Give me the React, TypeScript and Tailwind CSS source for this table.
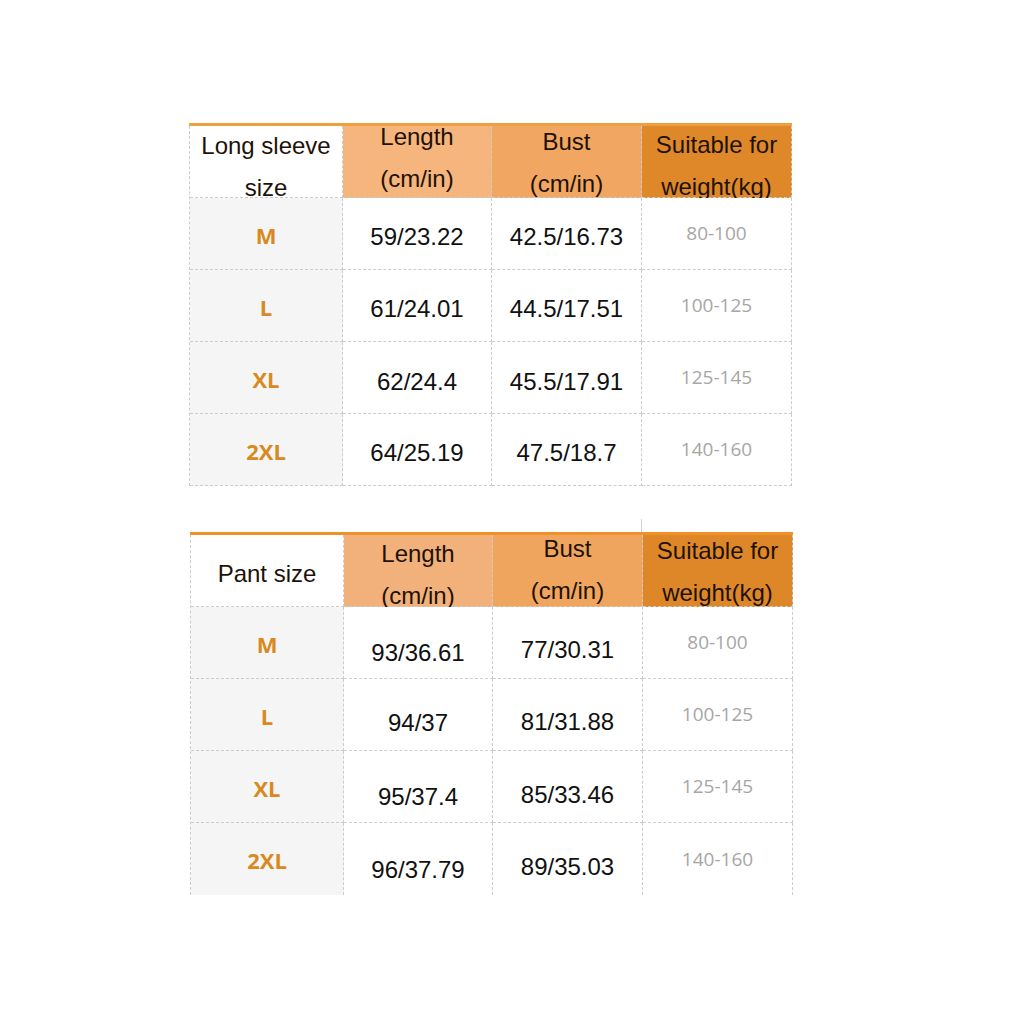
import React from "react";

type Row = { size: string; len: string; bust: string; weight: string; lenCls: string; bustCls: string };

const t1: Row[] = [
  { size: "M", len: "59/23.22", bust: "42.5/16.73", weight: "80-100", lenCls: "pt-[6px]", bustCls: "pt-[6px]" },
  { size: "L", len: "61/24.01", bust: "44.5/17.51", weight: "100-125", lenCls: "pt-[6px]", bustCls: "pt-[6px]" },
  { size: "XL", len: "62/24.4", bust: "45.5/17.91", weight: "125-145", lenCls: "pt-[8px]", bustCls: "pt-[8px]" },
  { size: "2XL", len: "64/25.19", bust: "47.5/18.7", weight: "140-160", lenCls: "pt-[6px]", bustCls: "pt-[6px]" },
];

const t2: Row[] = [
  { size: "M", len: "93/36.61", bust: "77/30.31", weight: "80-100", lenCls: "pt-[20px]", bustCls: "pt-[14px]" },
  { size: "L", len: "94/37", bust: "81/31.88", weight: "100-125", lenCls: "pt-[16px]", bustCls: "pt-[14px]" },
  { size: "XL", len: "95/37.4", bust: "85/33.46", weight: "125-145", lenCls: "pt-[20px]", bustCls: "pt-[16px]" },
  { size: "2XL", len: "96/37.79", bust: "89/35.03", weight: "140-160", lenCls: "pt-[22px]", bustCls: "pt-[16px]" },
];

const num = "font-['Liberation_Sans',Arial,sans-serif] text-[24px] leading-none text-[#111]";
const sizeCls = "font-['Open_Sans',sans-serif] font-bold text-[22px] leading-none text-[#d88a20]";
const wCls = "font-['Open_Sans',sans-serif] text-[19px] leading-none text-[#a6a6a6]";
const head = "font-['Liberation_Sans',Arial,sans-serif] text-[24px] leading-[42px] text-[#1e1208] text-center whitespace-nowrap";
const cellB = "border-r border-b border-dashed border-[#cccccc]";

function Body({ rows, last }: { rows: Row[]; last: boolean }) {
  return (
    <>
      {rows.map((r, i) => {
        const b = last && i === rows.length - 1 ? "border-r border-dashed border-[#cccccc]" : cellB;
        return (
          <React.Fragment key={r.size}>
            <div className={`${b} h-[72px] bg-[#f5f5f5] flex items-center justify-center pt-[2px]`}>
              <span className={sizeCls}>{r.size}</span>
            </div>
            <div className={`${b} h-[72px] bg-white flex items-center justify-center ${r.lenCls}`}>
              <span className={num}>{r.len}</span>
            </div>
            <div className={`${b} h-[72px] bg-white flex items-center justify-center ${r.bustCls}`}>
              <span className={num}>{r.bust}</span>
            </div>
            <div className={`${b} h-[72px] bg-white flex items-center justify-center`}>
              <span className={wCls}>{r.weight}</span>
            </div>
          </React.Fragment>
        );
      })}
    </>
  );
}

export default function App() {
  return (
    <div className="w-[1020px] h-[1020px] bg-white overflow-hidden">
      {/* Table 1 */}
      <div className="pt-[123px] pl-[189px]">
        <div className="w-[603px] h-[3px] bg-[#efa03c]" />
        <div className="grid grid-cols-[153px_149px_150px_150px] w-[603px] border-l border-dashed border-[#cccccc]">
          <div className={`${cellB} h-[72px] bg-white flex flex-col items-center`}>
            <div className={`${head} mt-[-1px]`}>Long sleeve<br />size</div>
          </div>
          <div className={`${cellB} h-[72px] bg-[#f5b57d] flex flex-col items-center`}>
            <div className={`${head} mt-[-10px]`}>Length<br />(cm/in)</div>
          </div>
          <div className={`${cellB} h-[72px] bg-[#f1a762] flex flex-col items-center`}>
            <div className={`${head} mt-[-5px]`}>Bust<br />(cm/in)</div>
          </div>
          <div className={`${cellB} h-[72px] bg-[#de8829] flex flex-col items-center`}>
            <div className={`${head} mt-[-2px]`}>Suitable for<br />weight(kg)</div>
          </div>
          <Body rows={t1} last={false} />
        </div>
      </div>

      {/* artifact line */}
      <div className="pl-[641px] pt-[33px]">
        <div className="w-px h-[13px] bg-[#d4d4d4]" />
      </div>

      {/* Table 2 */}
      <div className="pl-[190px]">
        <div className="w-[603px] h-[3px] bg-[#ef9128]" />
        <div className="grid grid-cols-[153px_149px_150px_150px] w-[603px] border-l border-dashed border-[#cccccc]">
          <div className={`${cellB} h-[72px] bg-white flex flex-col items-center`}>
            <div className={`${head} mt-[18px]`}>Pant size</div>
          </div>
          <div className={`${cellB} h-[72px] bg-[#f2b07a] flex flex-col items-center`}>
            <div className={`${head} mt-[-2px]`}>Length<br />(cm/in)</div>
          </div>
          <div className={`${cellB} h-[72px] bg-[#f0a55f] flex flex-col items-center`}>
            <div className={`${head} mt-[-7px]`}>Bust<br />(cm/in)</div>
          </div>
          <div className={`${cellB} h-[72px] bg-[#de8728] flex flex-col items-center`}>
            <div className={`${head} mt-[-5px]`}>Suitable for<br />weight(kg)</div>
          </div>
          <Body rows={t2} last={true} />
        </div>
      </div>
    </div>
  );
}
